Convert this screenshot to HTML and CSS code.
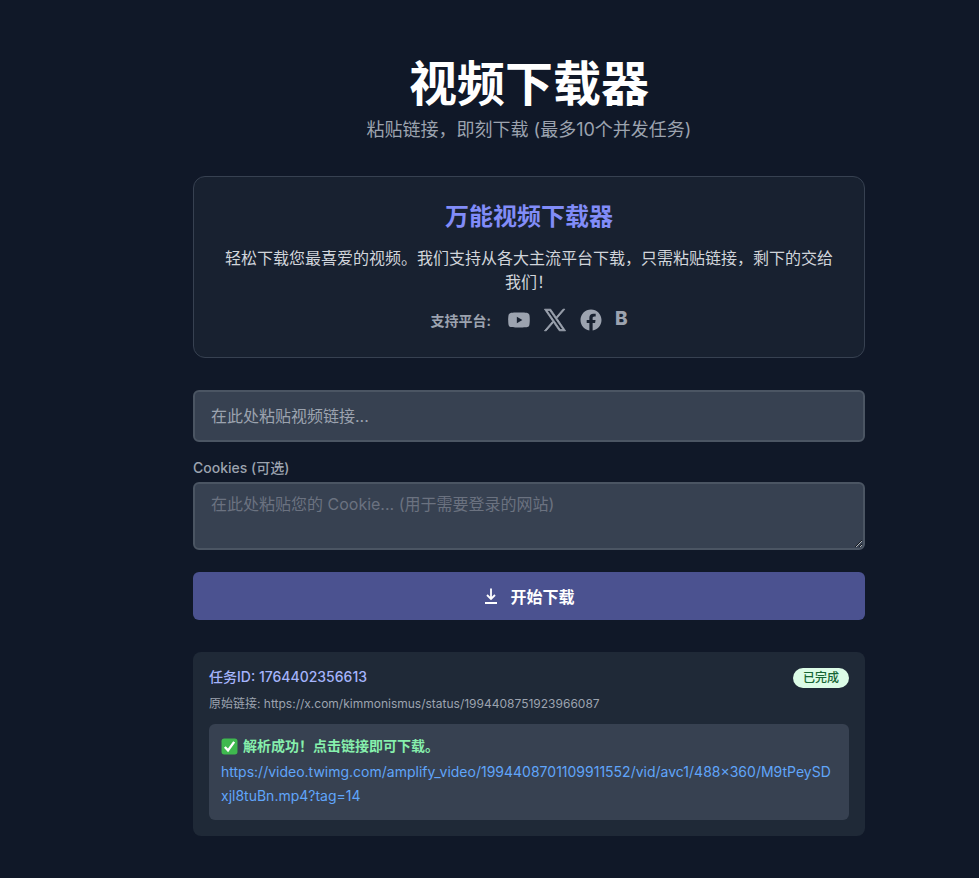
FILE: index.html
```html
<!DOCTYPE html>
<html lang="zh-CN">
<head>
<meta charset="utf-8">
<title>视频下载器</title>
<link rel="stylesheet" href="styles.css">
</head>
<body>
<main class="page">
  <div class="container">
    <header class="header">
      <h1 class="title">视频下载器</h1>
      <p class="subtitle">粘贴链接，即刻下载 (最多10个并发任务)</p>
    </header>
    <section class="intro">
      <h2 class="intro-title">万能视频下载器</h2>
      <p class="intro-text">轻松下载您最喜爱的视频。我们支持从各大主流平台下载，只需粘贴链接，剩下的交给我们！</p>
      <div class="platforms">
        <span class="platforms-label">支持平台:</span>
        <svg class="icon-yt" viewBox="0 0 24 24" width="24" height="24" fill="currentColor"><path d="M23.5 6.2a3 3 0 0 0-2.1-2.1C19.5 3.6 12 3.6 12 3.6s-7.5 0-9.4.5A3 3 0 0 0 .5 6.2C0 8.1 0 12 0 12s0 3.9.5 5.8a3 3 0 0 0 2.1 2.1c1.9.5 9.4.5 9.4.5s7.5 0 9.4-.5a3 3 0 0 0 2.1-2.1c.5-1.9.5-5.8.5-5.8s0-3.9-.5-5.8zM9.6 15.6V8.4l6.2 3.6-6.2 3.6z" transform="translate(1.2 1.2) scale(.9)"/></svg>
        <svg class="icon-x" viewBox="0 0 24 24" width="24" height="24" fill="currentColor" stroke="currentColor" stroke-width=".9"><path d="M14.23 10.16 22.97 0h-2.07l-7.59 8.82L7.25 0H.26l9.17 13.34L.26 24h2.07l8.02-9.32L16.75 24h6.99l-9.51-13.84zM3.08 1.56h3.18l14.65 20.96h-3.18L3.08 1.56z" transform="translate(1.2 1.2) scale(.9)"/></svg>
        <svg class="icon-fb" viewBox="0 0 24 24" width="24" height="24" fill="currentColor"><path d="M24 12.07C24 5.4 18.63 0 12 0S0 5.4 0 12.07c0 6.03 4.39 11.02 10.13 11.93v-8.44H7.08v-3.49h3.05V9.41c0-3.02 1.79-4.69 4.53-4.69 1.31 0 2.69.24 2.69.24v2.97h-1.52c-1.49 0-1.96.93-1.96 1.89v2.25h3.33l-.53 3.49h-2.8V24C19.61 23.09 24 18.1 24 12.07z" transform="translate(1.5 1.5) scale(.875)"/></svg>
        <span class="icon-b">B</span>
      </div>
    </section>
    <form class="form">
      <input class="field field-url" type="text" placeholder="在此处粘贴视频链接...">
      <label class="field-label" for="cookies">Cookies (可选)</label>
      <textarea class="field field-cookie" id="cookies" placeholder="在此处粘贴您的 Cookie... (用于需要登录的网站)"></textarea>
      <button class="submit" type="button">
        <svg viewBox="0 0 16 16" width="16" height="16" fill="none" stroke="currentColor" stroke-width="1.8"><path d="M8 .5v10.5M4 7l4 4 4-4M2 15h12"/></svg>
        <span>开始下载</span>
      </button>
    </form>
    <section class="task">
      <div class="task-head">
        <span class="task-id">任务ID: 1764402356613</span>
        <span class="badge">已完成</span>
      </div>
      <p class="task-source">原始链接: https://x.com/kimmonismus/status/1994408751923966087</p>
      <div class="result">
        <p class="result-ok"><svg class="check" viewBox="0 0 16 16" width="17" height="17"><rect x=".5" y=".5" width="15" height="15" rx="2.5" fill="#3fb94f"/><path d="M3.6 8.4 6.6 11.6 12.4 3.6" fill="none" stroke="#fff" stroke-width="2.2"/></svg>解析成功！点击链接即可下载。</p>
        <a class="result-link" href="#">https://video.twimg.com/amplify_video/1994408701109911552/vid/avc1/488×360/M9tPeySDxjl8tuBn.mp4?tag=14</a>
      </div>
    </section>
  </div>
</main>
</body>
</html>
```
FILE: styles.css
```css
* { box-sizing: border-box; }
html, body { margin: 0; padding: 0; }
body {
  background: #101828;
  color: #fff;
  font-family: Inter, "Noto Sans CJK SC", sans-serif;
  height: 878px;
  overflow: hidden;
}
.page { display: flex; justify-content: center; padding: 48px 0 0 79px; }
.container { width: 672px; }
.header { text-align: center; margin-bottom: 36px; }
.title { margin: 0; font-size: 48px; line-height: 72px; font-weight: 700; }
.subtitle { margin: 0; font-size: 18px; line-height: 20px; color: #9ca3af; }
.intro {
  height: 182px;
  padding: 24px 24px 0;
  background: #182130;
  border: 1px solid #374151;
  border-radius: 12px;
  text-align: center;
  margin-bottom: 32px;
}
.intro-title { margin: 0 0 13px; font-size: 24px; line-height: 32px; font-weight: 700; color: #818cf8; }
.intro-text { margin: 0 0 10px; font-size: 16px; line-height: 24px; color: #d1d5db; }
.platforms { display: flex; justify-content: center; align-items: center; gap: 12px; color: #9ca3af; height: 32px; }
.platforms-label { font-size: 14px; font-weight: 600; margin-right: 4px; }
.icon-b { font-size: 19px; font-weight: 800; line-height: 24px; align-self: flex-start; margin-top: 3px; }
.form { display: flex; flex-direction: column; }
.field {
  display: block;
  width: 100%;
  background: #374151;
  border: 2px solid #4b5563;
  border-radius: 6px;
  color: #fff;
  font-family: inherit;
  font-size: 16px;
  padding: 0 16px;
  outline: none;
}
.field-url { height: 52px; margin-bottom: 16px; }
.field-url::placeholder { color: #9ca3af; }
.field-label { font-size: 14px; font-weight: 500; line-height: 20px; color: #9ca3af; margin-bottom: 4px; }
.field-cookie { height: 68px; padding-top: 8px; line-height: 24px; margin-bottom: 22px; }
.field-cookie::placeholder { color: #6b7280; }
.submit {
  display: flex;
  align-items: center;
  justify-content: center;
  gap: 11px;
  height: 48px;
  width: 100%;
  border: 0;
  border-radius: 6px;
  background: #4b5290;
  color: #fff;
  font-family: inherit;
  font-size: 16px;
  font-weight: 700;
}
.task {
  margin-top: 32px;
  height: 184px;
  padding: 16px;
  background: #1f2937;
  border-radius: 8px;
}
.task-head { display: flex; justify-content: space-between; align-items: flex-start; height: 20px; }
.task-id { font-size: 14px; font-weight: 500; line-height: 18px; color: #a5b4fc; }
.badge {
  background: #dcfce7;
  color: #166534;
  border-radius: 10px;
  font-size: 12px;
  font-weight: 500;
  line-height: 20px;
  padding: 0 10px;
}
.task-source { margin: 8px 0 0; font-size: 12px; line-height: 16px; color: #9ca3af; }
.result {
  margin-top: 12px;
  height: 96px;
  padding: 12px;
  background: #374151;
  border-radius: 6px;
  font-size: 14px;
}
.result-ok { display: flex; align-items: center; gap: 5px; margin: 0 0 4px; line-height: 20px; font-weight: 700; color: #86efac; }
.result-link { display: block; color: #60a5fa; text-decoration: none; line-height: 24px; word-break: break-all; }
```
